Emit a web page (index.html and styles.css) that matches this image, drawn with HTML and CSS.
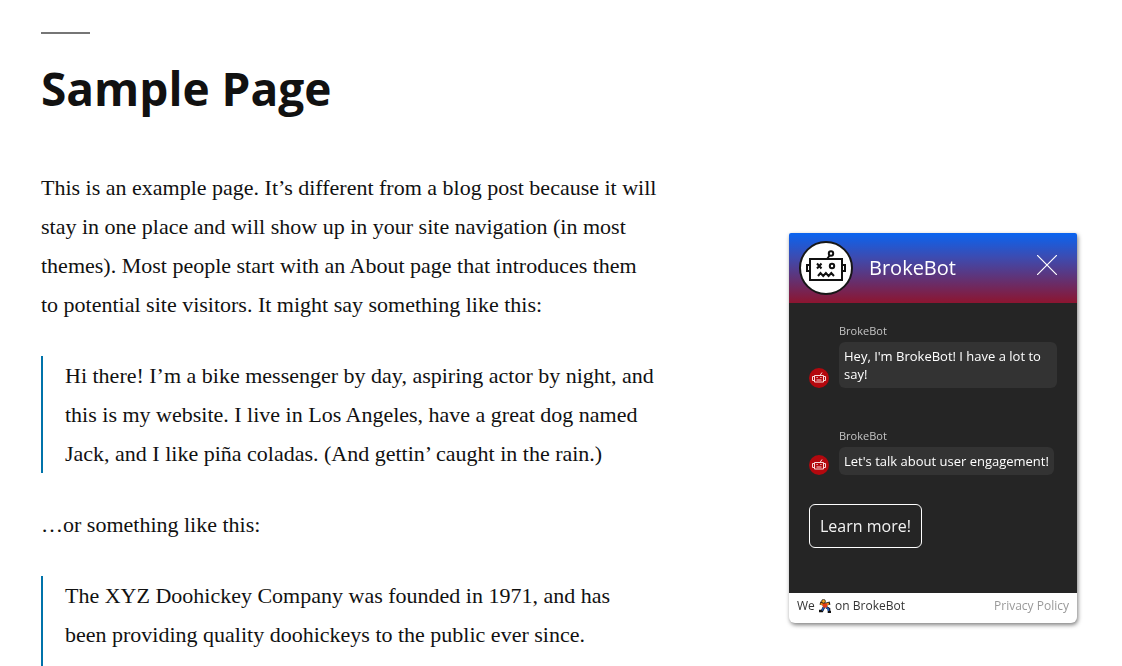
FILE: index.html
```html
<!DOCTYPE html>
<html lang="en">
<head>
<meta charset="utf-8">
<meta name="viewport" content="width=device-width, initial-scale=1">
<title>Sample Page</title>
<link rel="stylesheet" href="styles.css">
</head>
<body>
<main class="page">
  <header class="page-header">
    <h1 class="page-title">Sample Page</h1>
  </header>
  <div class="content">
    <p>This is an example page. It’s different from a blog post because it will stay in one place and will show up in your site navigation (in most themes). Most people start with an About page that introduces them to potential site visitors. It might say something like this:</p>
    <blockquote>Hi there! I’m a bike messenger by day, aspiring actor by night, and this is my website. I live in Los Angeles, have a great dog named Jack, and I like piña coladas. (And gettin’ caught in the rain.)</blockquote>
    <p>…or something like this:</p>
    <blockquote>The XYZ Doohickey Company was founded in 1971, and has been providing quality doohickeys to the public ever since. Located in Gotham City, XYZ employs over 2,000 people and does all kinds of awesome things for the Gotham community.</blockquote>
  </div>
</main>

<aside class="chat" aria-label="BrokeBot chat">
  <header class="chat-header">
    <svg class="chat-logo" viewBox="0 0 54 54" aria-hidden="true">
      <circle cx="27" cy="27" r="26" fill="#fff" stroke="#171717" stroke-width="2"/>
      <g fill="none" stroke="#111" stroke-width="2">
        <rect x="11" y="18" width="32" height="21"/>
        <path d="M11 24H8v6h3M43 24h3v6h-3M28 18l3-4"/>
        <circle cx="32" cy="12.500" r="2.200"/>
        <circle cx="33" cy="25" r="2.200"/>
        <path d="M18 22.500l4.500 5m0-5l-4.500 5"/>
        <path d="M19 35l2.500-3 2.700 3 2.700-3 2.700 3 2.700-3 2.700 3"/>
      </g>
    </svg>
    <h2 class="chat-name">BrokeBot</h2>
    <button class="chat-close" type="button" aria-label="Close chat">
      <svg viewBox="0 0 20 20" aria-hidden="true"><path d="M0 0l20 20M20 0L0 20" fill="none" stroke="#fff" stroke-width="1.200"/></svg>
    </button>
  </header>
  <div class="chat-body">
    <div class="message">
      <svg class="avatar" viewBox="0 0 20 20" aria-hidden="true">
        <circle cx="10" cy="10" r="10" fill="#b3080e"/>
        <path d="M5.500 7.500h9v6.500h-9zM5 8.500H3.500v4H5M15 8.500h1.500v4H15M11 7.500l2-3" fill="none" stroke="#f7d9d9"/>
        <path d="M7.500 9.500h1.200M11.300 9.500h1.200M7.500 12h5" stroke="#f7d9d9"/>
      </svg>
      <div class="message-main">
        <span class="sender">BrokeBot</span>
        <p class="bubble">Hey, I'm BrokeBot! I have a lot to say!</p>
      </div>
    </div>
    <div class="message">
      <svg class="avatar" viewBox="0 0 20 20" aria-hidden="true">
        <circle cx="10" cy="10" r="10" fill="#b3080e"/>
        <path d="M5.500 7.500h9v6.500h-9zM5 8.500H3.500v4H5M15 8.500h1.500v4H15M11 7.500l2-3" fill="none" stroke="#f7d9d9"/>
        <path d="M7.500 9.500h1.200M11.300 9.500h1.200M7.500 12h5" stroke="#f7d9d9"/>
      </svg>
      <div class="message-main">
        <span class="sender">BrokeBot</span>
        <p class="bubble">Let's talk about user engagement!</p>
      </div>
    </div>
    <button class="reply" type="button">Learn more!</button>
  </div>
  <footer class="chat-footer">
    <span class="credit">We
      <svg class="runner" viewBox="0 0 12 14" role="img" aria-label="dancer">
        <path d="M5 8L3 12H0M7 8l3 2v3h2" fill="none" stroke="#111" stroke-width="2.600"/>
        <path d="M1 4l3 1h4l3-1" fill="none" stroke="#111" stroke-width="3"/>
        <path d="M5 8L3 11.500M7 8l2.500 2v2" fill="none" stroke="#1f55b5" stroke-width="1.600"/>
        <path d="M1.500 4.500L4 5.500h3.500l2.500-1" fill="none" stroke="#f08a18" stroke-width="2"/>
        <path d="M3.500 4.500h4.500v4H4z" fill="#e33b18"/>
        <circle cx="4.500" cy="2.300" r="1.900" fill="#f5a623" stroke="#111" stroke-width=".7"/>
      </svg>
      on BrokeBot</span>
    <a class="privacy" href="#privacy">Privacy Policy</a>
  </footer>
</aside>
</body>
</html>
```
FILE: styles.css
```css
* { box-sizing: border-box; }
body {
  margin: 0;
  height: 100vh;
  overflow: hidden;
  background: #fff;
  color: #111;
  font: 22px/39px "Liberation Serif", "Times New Roman", serif;
}
.page { padding: 32px 41px; }
.page-header::before {
  content: "";
  display: block;
  width: 49px;
  height: 2px;
  background: #767676;
}
.page-title {
  margin: 24px 0 50px;
  font: 700 46px/60px "Open Sans", "Noto Sans", sans-serif;
}
.content {
  display: flex;
  flex-direction: column;
  gap: 32px;
  max-width: 617px;
}
.content p, .content blockquote { margin: 0; }
.content blockquote {
  padding: 0 3px 0 22px;
  border-left: 2px solid #0073aa;
}
.chat {
  position: fixed;
  right: 45px;
  bottom: 43px;
  width: 288px;
  overflow: hidden;
  border-radius: 2px 2px 6px 6px;
  background: #fff;
  box-shadow: 1px 2px 4px rgba(0, 0, 0, .5);
  font: 13px/18px "Open Sans", "Noto Sans", sans-serif;
}
.chat-header {
  display: flex;
  align-items: center;
  gap: 16px;
  height: 70px;
  padding: 0 20px 0 10px;
  background: linear-gradient(#0a64f0, #3d4bb0 35%, #8c1530);
}
.chat-logo { width: 54px; height: 54px; }
.chat-name {
  flex: 1;
  margin: 0;
  color: #fff;
  font-size: 20px;
  font-weight: 400;
  line-height: 28px;
}
.chat-close {
  width: 20px;
  height: 20px;
  margin-bottom: 6px;
  padding: 0;
  border: 0;
  background: none;
}
.chat-close svg { display: block; }
.chat-body {
  padding: 20px 20px 45px;
  background: #252525;
}
.message {
  display: flex;
  align-items: flex-end;
  gap: 10px;
  margin-bottom: 40px;
}
.message + .message { margin-bottom: 29px; }
.avatar {
  flex: none;
  width: 20px;
  height: 20px;
}
.sender {
  display: block;
  margin-bottom: 3px;
  color: #c4c4c4;
  font-size: 11px;
  line-height: 16px;
}
.bubble {
  width: fit-content;
  margin: 0;
  padding: 5px;
  border-radius: 6px;
  background: #333;
  color: #fff;
}
.reply {
  display: block;
  padding: 9px 10px;
  border: 1px solid #fff;
  border-radius: 6px;
  background: none;
  color: #f2f2f2;
  font: 16px/24px "Open Sans", "Noto Sans", sans-serif;
}
.chat-footer {
  display: flex;
  justify-content: space-between;
  padding: 4px 8px 8px;
  color: #333;
  font-size: 12px;
}
.runner {
  width: 12px;
  height: 14px;
  margin: 0 1px;
  vertical-align: -3px;
}
.privacy {
  color: #999;
  text-decoration: none;
}
```
